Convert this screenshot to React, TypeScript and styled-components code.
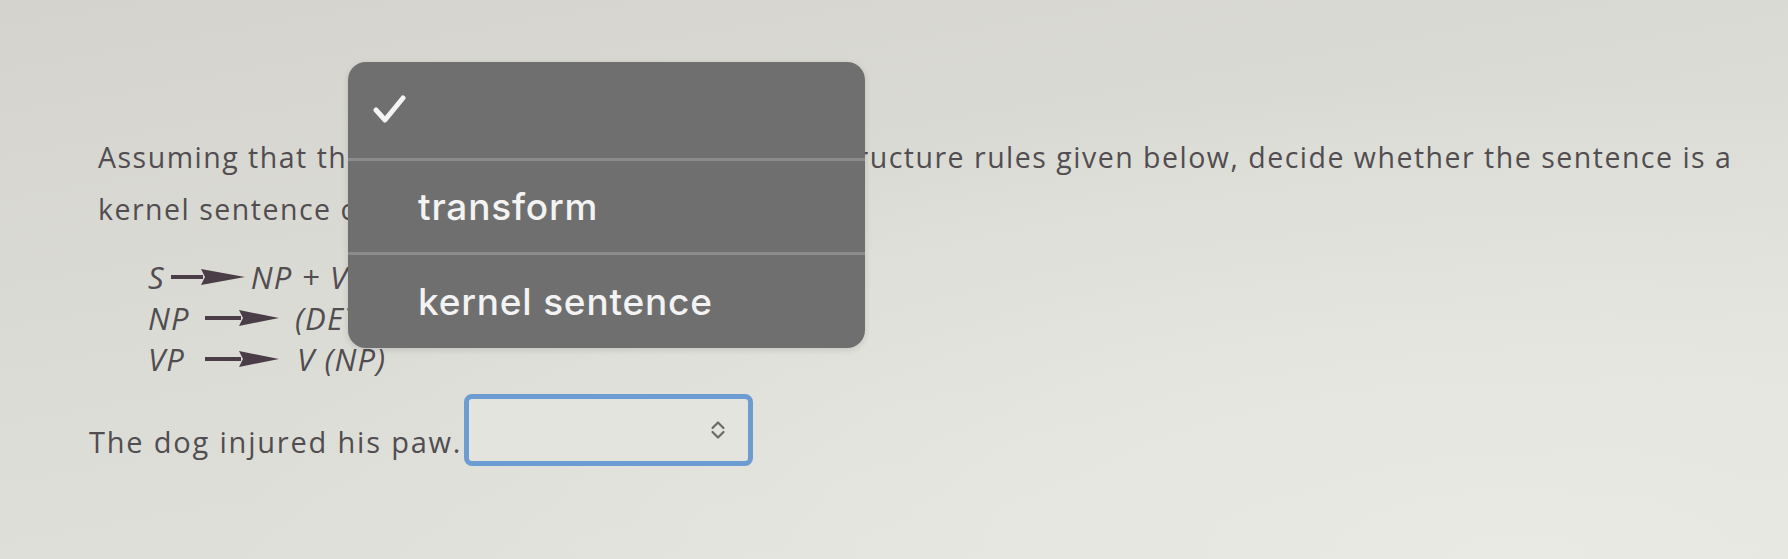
import styled, { createGlobalStyle } from 'styled-components';

const GlobalStyle = createGlobalStyle`
    html, body {
        margin: 0;
        padding: 0;
    }
    body {
        font-family: "Open Sans", "Liberation Sans", sans-serif;
    }
`;

const Arrow = ({ width, head }: { width: number; head: number }) => (
    <svg width={width} height="20" viewBox={`0 0 ${width} 20`}>
        <line x1="0" y1="10" x2={width - head + 2} y2="10" stroke="#4b3d47" strokeWidth="4" />
        <polygon points={`${width - head},2 ${width},10 ${width - head},18 ${width - head + 4},10`} fill="#4b3d47" />
    </svg>
);

const Check = () => (
    <svg width="34" height="30" viewBox="0 0 34 30">
        <path d="M4 15 L13 25 L31 3" fill="none" stroke="#f4f4f4" strokeWidth="5" strokeLinecap="round" strokeLinejoin="round" />
    </svg>
);

const Chevrons = () => (
    <svg width="16" height="20" viewBox="0 0 16 20">
        <path d="M2.5 8 L8 2.5 L13.5 8" fill="none" stroke="#6a6a6a" strokeWidth="2.2" strokeLinecap="round" strokeLinejoin="round" />
        <path d="M2.5 12 L8 17.5 L13.5 12" fill="none" stroke="#6a6a6a" strokeWidth="2.2" strokeLinecap="round" strokeLinejoin="round" />
    </svg>
);

const App = () => {
    return (
        <Page>
            <GlobalStyle />
            <Question>
                Assuming that the grammar uses only the phrase structure rules given below, decide whether the sentence is a
                <br />
                kernel sentence or a transform.
            </Question>

            <Rules>
                <Rule>
                    <Sym>S</Sym>
                    <ArrowGap $left={4} $right={6}>
                        <Arrow width={74} head={44} />
                    </ArrowGap>
                    <Sym>NP + VP</Sym>
                </Rule>
                <Rule>
                    <Sym $w={46}>NP</Sym>
                    <ArrowGap $left={9} $right={16}>
                        <Arrow width={74} head={40} />
                    </ArrowGap>
                    <Sym>(DET) N</Sym>
                </Rule>
                <Rule>
                    <Sym $w={46}>VP</Sym>
                    <ArrowGap $left={9} $right={18}>
                        <Arrow width={74} head={40} />
                    </ArrowGap>
                    <Sym>V (NP)</Sym>
                </Rule>
            </Rules>

            <AnswerRow>
                <Sentence>The dog injured his paw.</Sentence>
                <SelectBox>
                    <Chevrons />
                </SelectBox>
            </AnswerRow>

            {/* Open picker menu over the question */}
            <Menu>
                <MenuItem $h={96}>
                    <CheckSlot>
                        <Check />
                    </CheckSlot>
                </MenuItem>
                <MenuItem $h={94} $divider>
                    <MenuLabel>transform</MenuLabel>
                </MenuItem>
                <MenuItem $h={96} $divider>
                    <MenuLabel>kernel sentence</MenuLabel>
                </MenuItem>
            </Menu>
        </Page>
    );
};

const Page = styled.div`
    position: relative;
    height: 559px;
    box-sizing: border-box;
    padding: 131px 0 0 98px;
    overflow: hidden;
    color: #514d50;
    background:
        radial-gradient(ellipse at 85% 100%, #e9eae4 0%, rgba(233, 234, 228, 0) 60%),
        linear-gradient(170deg, #d4d3cd 0%, #dcdcd6 45%, #e2e3dd 100%);
`;

const Question = styled.p`
    margin: 0;
    font-size: 28.5px;
    line-height: 52px;
    white-space: nowrap;
    letter-spacing: 1.5px;
`;

const Rules = styled.div`
    display: flex;
    flex-direction: column;
    margin: 21px 0 0 50px;
`;

const Rule = styled.div`
    display: flex;
    align-items: center;
    height: 41px;
`;

const Sym = styled.span<{ $w?: number }>`
    font-style: italic;
    font-size: 31px;
    letter-spacing: 1.2px;
    width: ${(p) => (p.$w ? `${p.$w}px` : 'auto')};
    padding-right: 2px;
`;

const ArrowGap = styled.span<{ $left: number; $right: number }>`
    display: flex;
    margin: 0 ${(p) => p.$right}px 0 ${(p) => p.$left}px;
`;

const AnswerRow = styled.div`
    display: flex;
    align-items: flex-end;
    margin: 15px 0 0 -9px;
`;

const Sentence = styled.span`
    font-size: 29px;
    line-height: 40px;
    letter-spacing: 1.8px;
    margin: 0 2px 4px 0;
`;

const SelectBox = styled.div`
    width: 289px;
    height: 72px;
    box-sizing: border-box;
    border: 5px solid #6d9cd3;
    border-radius: 8px;
    background: #e4e4df;
    display: flex;
    align-items: center;
    justify-content: flex-end;
    padding-right: 22px;
`;

const Menu = styled.div`
    position: absolute;
    left: 348px;
    top: 62px;
    width: 517px;
    border-radius: 18px;
    background: #6f6f6f;
    overflow: hidden;
    box-shadow: 0 2px 6px rgba(0, 0, 0, 0.12);
`;

const MenuItem = styled.div<{ $h: number; $divider?: boolean }>`
    height: ${(p) => p.$h}px;
    box-sizing: border-box;
    display: flex;
    align-items: center;
    border-top: ${(p) => (p.$divider ? '3px solid #8b8b8b' : 'none')};
`;

const CheckSlot = styled.span`
    display: flex;
    margin-left: 24px;
`;

const MenuLabel = styled.span`
    margin-left: 70px;
    font-family: Inter, Roboto, "Liberation Sans", sans-serif;
    font-weight: 500;
    font-size: 37px;
    letter-spacing: 0.8px;
    color: #f3f3f3;
`;

export default App;
